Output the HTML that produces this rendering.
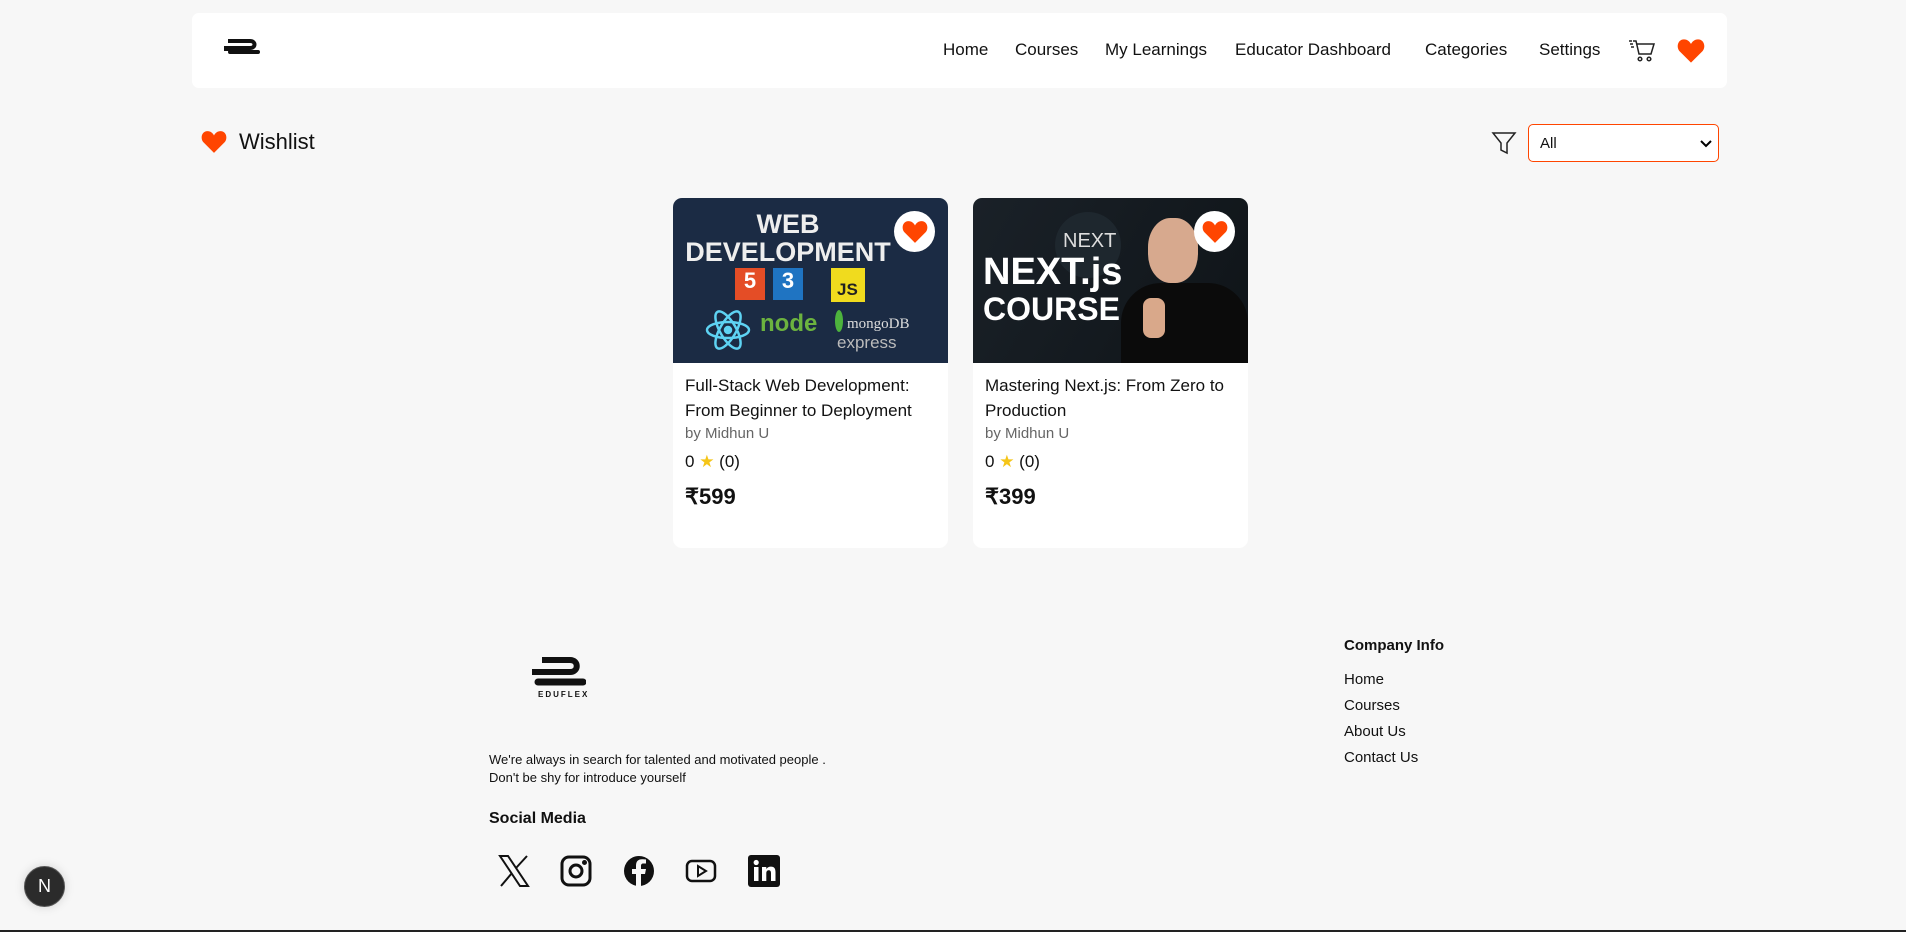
<!DOCTYPE html>
<html><head><meta charset="utf-8"><style>
*{box-sizing:border-box;margin:0;padding:0}
body{width:1906px;height:932px;background:#f7f7f7;font-family:"Liberation Sans",sans-serif;color:#111;position:relative;overflow:hidden;border-bottom:2px solid #222}
.abs{position:absolute}
.nav{left:192px;top:13px;width:1535px;height:75px;background:#fff;border-radius:7px}
.nav a{position:absolute;top:27px;font-size:17px;color:#111;text-decoration:none;white-space:nowrap}
.card{position:absolute;top:198px;width:275px;height:350px;background:#fff;border-radius:9px;overflow:hidden}
.img{height:165px;position:relative;overflow:hidden}
.hb{position:absolute;right:13px;top:13px;width:41px;height:41px;border-radius:50%;background:#fff;display:flex;align-items:center;justify-content:center}
.t{position:absolute;left:12px;font-size:17px;color:#111}
.ft a{display:block;font-size:15px;color:#111;position:absolute;left:1344px}
</style></head><body>
<div class="abs nav">
 <svg class="abs" style="left:32px;top:22px" width="36" height="20" viewBox="0 0 36 20"><path d="M4 6h22c6 0 6 7 0 7H1v1h24" fill="none" stroke="#111" stroke-width="4"/><path d="M6 17h28" stroke="#111" stroke-width="4" stroke-linecap="round"/></svg>
 <a style="left:751px">Home</a><a style="left:823px">Courses</a><a style="left:913px">My Learnings</a><a style="left:1043px">Educator Dashboard</a><a style="left:1233px">Categories</a><a style="left:1347px">Settings</a>
 <svg class="abs" style="left:1436px;top:24px" width="28" height="28" viewBox="0 0 28 28" fill="none" stroke="#222" stroke-width="1.5"><path d="M1 4h3M2 7h3M3 10h3M5 4h3l3 13h12l3-10H9"/><circle cx="12" cy="22" r="1.8"/><circle cx="21" cy="22" r="1.8"/></svg>
 <svg class="abs" style="left:1485px;top:25px" width="28" height="26" viewBox="0 0 24 22"><path d="M12 21L2 11C-1 7 1 1 6 1c3 0 5 2 6 4 1-2 3-4 6-4 5 0 7 6 4 10z" fill="#ff4500"/></svg>
</div>
<svg class="abs" style="left:201px;top:130px" width="26" height="24" viewBox="0 0 24 22"><path d="M12 21L2 11C-1 7 1 1 6 1c3 0 5 2 6 4 1-2 3-4 6-4 5 0 7 6 4 10z" fill="#ff4500"/></svg>
<div class="abs" style="left:239px;top:129px;font-size:22px">Wishlist</div>
<svg class="abs" style="left:1491px;top:130px" width="26" height="26" viewBox="0 0 26 26" fill="none" stroke="#222" stroke-width="1.5"><path d="M2 3h22l-8 10v10l-6-3v-7z"/></svg>
<div class="abs" style="left:1528px;top:124px;width:191px;height:38px;border:1.5px solid #ff4500;border-radius:5px;background:#fff;font-size:15px;padding:10px 0 0 11px">All<svg class="abs" style="right:6px;top:14px" width="12" height="9" viewBox="0 0 12 9"><path d="M1 2l5 5 5-5" fill="none" stroke="#000" stroke-width="2"/></svg></div>

<div class="card" style="left:673px">
 <div class="img" style="background:#1b2b44">
  <div class="abs" style="left:0;width:230px;top:12px;text-align:center;color:#eee;font-weight:bold;font-size:27px;line-height:28px">WEB<br>DEVELOPMENT</div>
  <div class="abs" style="left:62px;top:70px;width:30px;height:32px;background:#e44d26;color:#fff;font-weight:bold;font-size:22px;text-align:center">5</div>
  <div class="abs" style="left:100px;top:70px;width:30px;height:32px;background:#1f74c2;color:#fff;font-weight:bold;font-size:22px;text-align:center">3</div>
  <div class="abs" style="left:158px;top:70px;width:34px;height:34px;background:#f0db1e;color:#222;font-weight:bold;font-size:17px;padding:12px 0 0 6px">JS</div>
  <svg class="abs" style="left:32px;top:112px" width="46" height="40" viewBox="0 0 46 40" fill="none" stroke="#5ed3f3" stroke-width="2.5"><ellipse cx="23" cy="20" rx="21" ry="8"/><ellipse cx="23" cy="20" rx="21" ry="8" transform="rotate(60 23 20)"/><ellipse cx="23" cy="20" rx="21" ry="8" transform="rotate(-60 23 20)"/><circle cx="23" cy="20" r="3" fill="#5ed3f3"/></svg>
  <div class="abs" style="left:87px;top:112px;color:#6cb33f;font-weight:bold;font-size:24px">node</div>
  <div class="abs" style="left:162px;top:112px;width:8px;height:22px;background:#4db33d;border-radius:50%"></div>
  <div class="abs" style="left:174px;top:118px;color:#ddd;font-family:'Liberation Serif',serif;font-size:15px">mongoDB</div>
  <div class="abs" style="left:164px;top:135px;color:#bbb;font-size:17px">express</div>
  <div class="hb"><svg width="26" height="24" viewBox="0 0 24 22"><path d="M12 21L2 11C-1 7 1 1 6 1c3 0 5 2 6 4 1-2 3-4 6-4 5 0 7 6 4 10z" fill="#ff4500"/></svg></div>
 </div>
 <div class="t" style="top:175px;line-height:25px">Full-Stack Web Development:<br>From Beginner to Deployment</div>
 <div class="t" style="top:227px;font-size:15px;color:#666">by Midhun U</div>
 <div class="t" style="top:254px;font-size:17px">0 <span style="color:#f5c518">★</span> (0)</div>
 <div class="t" style="top:286px;font-size:22px;font-weight:bold">₹599</div>
</div>

<div class="card" style="left:973px">
 <div class="img" style="background:linear-gradient(120deg,#1a2128,#0f1418)">
  <div class="abs" style="left:82px;top:14px;width:66px;height:66px;border-radius:50%;background:#1e272e"></div>
  <div class="abs" style="left:90px;top:32px;color:#ddd;font-size:20px">NEXT</div>
  <div class="abs" style="left:10px;top:55px;color:#fff;font-weight:bold;font-size:38px;line-height:38px">NEXT.js</div>
  <div class="abs" style="left:10px;top:93px;color:#fff;font-weight:bold;font-size:32px">COURSE</div>
  <div class="abs" style="left:175px;top:20px;width:50px;height:65px;border-radius:45%;background:#d7a98e"></div>
  <div class="abs" style="left:148px;top:85px;width:127px;height:90px;border-radius:40px 40px 0 0;background:#0b0b0b"></div>
  <div class="abs" style="left:170px;top:100px;width:22px;height:40px;border-radius:8px;background:#d9a88a"></div>
  <div class="hb"><svg width="26" height="24" viewBox="0 0 24 22"><path d="M12 21L2 11C-1 7 1 1 6 1c3 0 5 2 6 4 1-2 3-4 6-4 5 0 7 6 4 10z" fill="#ff4500"/></svg></div>
 </div>
 <div class="t" style="top:175px;line-height:25px">Mastering Next.js: From Zero to<br>Production</div>
 <div class="t" style="top:227px;font-size:15px;color:#666">by Midhun U</div>
 <div class="t" style="top:254px;font-size:17px">0 <span style="color:#f5c518">★</span> (0)</div>
 <div class="t" style="top:286px;font-size:22px;font-weight:bold">₹399</div>
</div>

<svg class="abs" style="left:530px;top:656px" width="56" height="32" viewBox="0 0 56 32"><path d="M12 4h28c9 0 9 12 0 12H2" fill="none" stroke="#111" stroke-width="6"/><path d="M8 26h45" stroke="#111" stroke-width="7" stroke-linecap="round"/></svg>
<div class="abs" style="left:538px;top:690px;font-size:8px;font-weight:bold;letter-spacing:2px">EDUFLEX</div>
<div class="abs" style="left:489px;top:751px;font-size:13px;line-height:18px">We're always in search for talented and motivated people .<br>Don't be shy for introduce yourself</div>
<div class="abs" style="left:489px;top:810px;font-size:16px;font-weight:bold">Social Media</div>
<svg class="abs" style="left:498px;top:855px" width="32" height="32" viewBox="0 0 32 32"><path d="M2 1h8l20 30h-8z" fill="none" stroke="#111" stroke-width="2"/><path d="M29 1L18 13M3 31l11-13" stroke="#111" stroke-width="2"/></svg>
<svg class="abs" style="left:560px;top:855px" width="32" height="32" viewBox="0 0 32 32" fill="none" stroke="#111" stroke-width="3"><rect x="2" y="2" width="28" height="28" rx="7"/><circle cx="16" cy="16" r="6"/><circle cx="24.5" cy="7.5" r="1" fill="#111"/></svg>
<svg class="abs" style="left:623px;top:855px" width="32" height="32" viewBox="0 0 32 32"><circle cx="16" cy="16" r="15" fill="#111"/><path d="M18 32V19h4l1-5h-5v-3c0-1.5.5-2.5 2.5-2.5H23V4.5c-1-.2-2.5-.3-4-.3-4 0-6 2.3-6 6.3V14H9v5h4v13z" fill="#f7f7f7"/></svg>
<svg class="abs" style="left:685px;top:858px" width="32" height="26" viewBox="0 0 32 26" fill="none" stroke="#111" stroke-width="2.5"><rect x="2" y="3" width="28" height="20" rx="5"/><path d="M13 8v10l8-5z" stroke-width="2"/></svg>
<svg class="abs" style="left:748px;top:855px" width="32" height="32" viewBox="0 0 32 32"><rect x="0" y="0" width="32" height="32" rx="3" fill="#111"/><rect x="6" y="12" width="4.5" height="14" fill="#fff"/><circle cx="8.2" cy="7.5" r="2.6" fill="#fff"/><path d="M14 12h4.3v2c1-1.6 2.6-2.4 4.6-2.4 3.6 0 4.6 2.3 4.6 5.6V26H23v-7.8c0-1.7-.5-3-2.2-3-1.8 0-2.5 1.3-2.5 3.1V26H14z" fill="#fff"/></svg>

<div class="ft">
 <div class="abs" style="left:1344px;top:637px;font-size:15px;font-weight:bold">Company Info</div>
 <a style="top:671px">Home</a><a style="top:697px">Courses</a><a style="top:723px">About Us</a><a style="top:749px">Contact Us</a>
</div>
<div class="abs" style="left:24px;top:866px;width:41px;height:41px;border-radius:50%;background:#2b2b2b;border:1.5px solid #555;box-shadow:0 0 10px rgba(0,0,0,.15);color:#fff;font-size:18px;text-align:center;line-height:38px">N</div>
</body></html>
